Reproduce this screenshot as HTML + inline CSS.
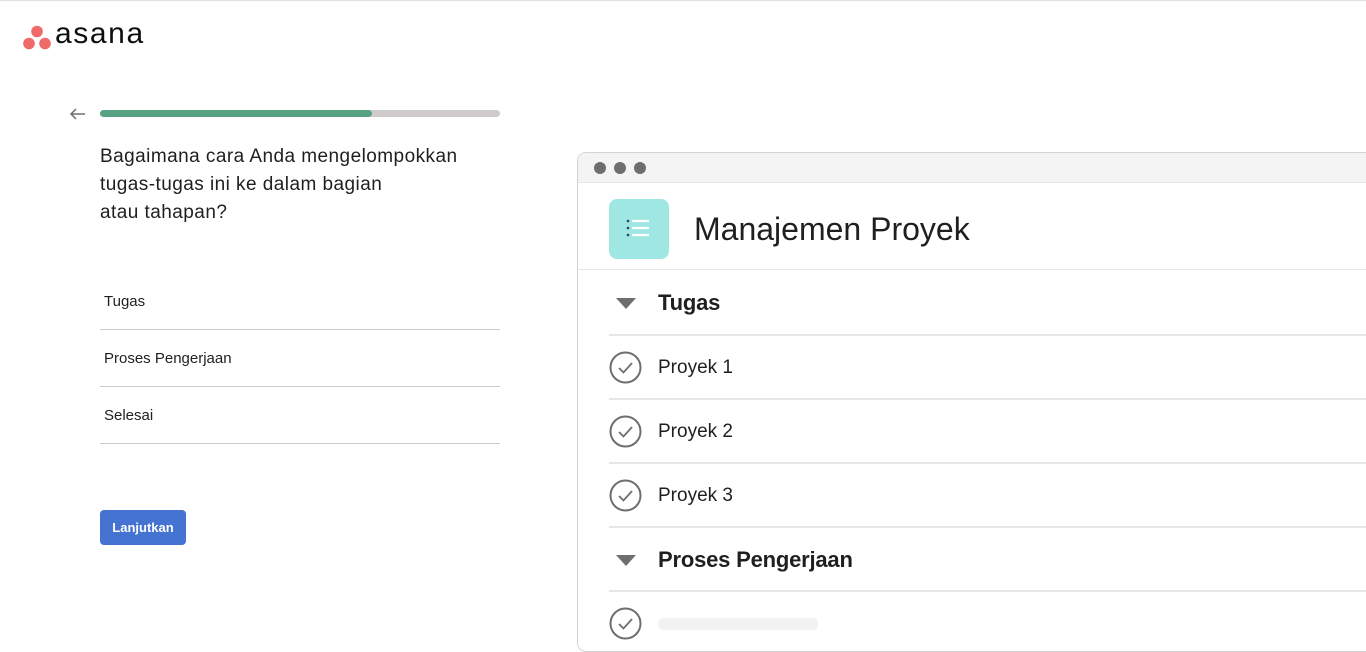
<!DOCTYPE html>
<html><head><meta charset="utf-8"><style>
*{margin:0;padding:0;box-sizing:border-box}
body{width:1366px;height:626px;overflow:hidden;background:#fff;font-family:"Liberation Sans","DejaVu Sans",sans-serif;color:#1e1f21;position:relative;border-top:1px solid #e0e0e0}
.a{position:absolute}
.q{left:100px;top:142px;font-size:19px;letter-spacing:0.45px;line-height:28px;color:#1e1f21}
.opt{left:100px;width:400px;height:57px;border-bottom:1px solid #cfcbcb;font-size:15px;padding-left:4px;line-height:20px}
.btn{left:100px;top:509px;width:86px;height:35px;background:#4573d2;border-radius:4px;color:#fff;font-size:13px;font-weight:bold;text-align:center;line-height:35px}
.win{left:577px;top:151px;width:820px;height:500px;border:1px solid #d5d3d3;border-radius:9px;background:#fff;overflow:hidden}
.bar{height:30px;background:#f5f4f4;border-bottom:1px solid #e8e6e6}
.dot{top:9px;width:12px;height:12px;border-radius:50%;background:#6d6e6f}
.line{left:31px;right:0;height:2px;background:#e8e6e6}
.sec{left:80px;font-size:22px;font-weight:bold;color:#1e1f21;letter-spacing:-0.2px}
.tri{left:38px;width:0;height:0;border-left:10px solid transparent;border-right:10px solid transparent;border-top:11px solid #6d6e6f}
.row{left:80px;font-size:19px;color:#1e1f21}
.chk{left:31px}
</style></head><body>
<svg class="a" style="left:23px;top:24px" width="28" height="26" viewBox="0 0 28 26"><circle cx="14" cy="6.5" r="5.8" fill="#f06a6a"/><circle cx="6" cy="18.5" r="5.8" fill="#f06a6a"/><circle cx="22" cy="18.5" r="5.8" fill="#f06a6a"/></svg>
<div class="a" style="left:55px;top:16px;font-size:30px;letter-spacing:1.6px;color:#0d0e10">asana</div>
<svg class="a" style="left:69px;top:106px" width="18" height="14" viewBox="0 0 18 14"><path d="M16 7H2M7 2L2 7l5 5" fill="none" stroke="#6d6e6f" stroke-width="1.5"/></svg>
<div class="a" style="left:100px;top:109px;width:400px;height:7px;border-radius:4px;background:#cfcbcb"></div>
<div class="a" style="left:100px;top:109px;width:272px;height:7px;border-radius:4px;background:#58a182"></div>
<div class="a q">Bagaimana cara Anda mengelompokkan<br>tugas-tugas ini ke dalam bagian<br>atau tahapan?</div>
<div class="a opt" style="top:272px;padding-top:19px">Tugas</div>
<div class="a opt" style="top:329px;padding-top:19px">Proses Pengerjaan</div>
<div class="a opt" style="top:386px;padding-top:19px">Selesai</div>
<div class="a btn">Lanjutkan</div>
<div class="a win">
<div class="bar"></div>
<div class="a dot" style="left:16px"></div><div class="a dot" style="left:36px"></div><div class="a dot" style="left:56px"></div>
<div class="a" style="left:31px;top:46px;width:60px;height:60px;border-radius:8px;background:#9ee7e3"></div>
<svg class="a" style="left:48px;top:65px" width="26" height="22" viewBox="0 0 26 22"><g fill="#1e4a5a"><circle cx="2" cy="3" r="1.3"/><circle cx="2" cy="10" r="1.3"/><circle cx="2" cy="17" r="1.3"/></g><g stroke="#fff" stroke-width="2.2" stroke-linecap="round"><path d="M7 3h15M7 10h15M7 17h15"/></g></svg>
<div class="a" style="left:116px;top:58px;font-size:32px;color:#1e1f21">Manajemen Proyek</div>
<div class="a" style="left:0;right:0;top:116px;height:1px;background:#e8e6e6"></div>
<div class="a tri" style="top:145px"></div>
<div class="a sec" style="top:137px">Tugas</div>
<div class="a line" style="top:181px"></div>
<svg class="a chk" style="top:198px" width="33" height="33" viewBox="0 0 33 33"><circle cx="16.5" cy="16.5" r="15" fill="none" stroke="#6d6e6f" stroke-width="2"/><path d="M10 17l4.5 4.5L23 12" fill="none" stroke="#6d6e6f" stroke-width="1.8"/></svg>
<div class="a row" style="top:204px">Proyek 1</div>
<div class="a line" style="top:245px"></div>
<svg class="a chk" style="top:262px" width="33" height="33" viewBox="0 0 33 33"><circle cx="16.5" cy="16.5" r="15" fill="none" stroke="#6d6e6f" stroke-width="2"/><path d="M10 17l4.5 4.5L23 12" fill="none" stroke="#6d6e6f" stroke-width="1.8"/></svg>
<div class="a row" style="top:268px">Proyek 2</div>
<div class="a line" style="top:309px"></div>
<svg class="a chk" style="top:326px" width="33" height="33" viewBox="0 0 33 33"><circle cx="16.5" cy="16.5" r="15" fill="none" stroke="#6d6e6f" stroke-width="2"/><path d="M10 17l4.5 4.5L23 12" fill="none" stroke="#6d6e6f" stroke-width="1.8"/></svg>
<div class="a row" style="top:332px">Proyek 3</div>
<div class="a line" style="top:373px"></div>
<div class="a tri" style="top:402px"></div>
<div class="a sec" style="top:394px">Proses Pengerjaan</div>
<div class="a line" style="top:437px"></div>
<svg class="a chk" style="top:454px" width="33" height="33" viewBox="0 0 33 33"><circle cx="16.5" cy="16.5" r="15" fill="none" stroke="#6d6e6f" stroke-width="2"/><path d="M10 17l4.5 4.5L23 12" fill="none" stroke="#6d6e6f" stroke-width="1.8"/></svg>
<div class="a" style="left:80px;top:465px;width:160px;height:12px;border-radius:5px;background:#f3f2f2"></div>
</div>
</body></html>
